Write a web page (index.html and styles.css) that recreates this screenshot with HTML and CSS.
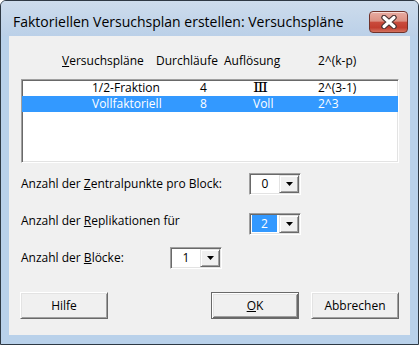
FILE: index.html
```html
<!DOCTYPE html>
<html lang="de">
<head>
<meta charset="utf-8">
<title>Faktoriellen Versuchsplan erstellen: Versuchspläne</title>
<link rel="stylesheet" href="styles.css">
</head>
<body>
<div class="window">
  <div class="titlebar">
    <span class="title">Faktoriellen Versuchsplan erstellen: Versuchspläne</span>
    <div class="close">
      <svg width="16" height="14" viewBox="0 0 16 14">
        <path d="M3 2.5 L13 11.5 M13 2.5 L3 11.5" stroke="#4a3232" stroke-width="5.5" stroke-linecap="round" fill="none"/>
        <path d="M3 2.5 L13 11.5 M13 2.5 L3 11.5" stroke="#ffffff" stroke-width="3.2" stroke-linecap="round" fill="none"/>
      </svg>
    </div>
  </div>
  <div class="client">
    <div class="colhead">
      <span><u>V</u>ersuchspläne</span>
      <span>Durchläufe</span>
      <span>Auflösung</span>
      <span>2^(k-p)</span>
    </div>
    <div class="listbox">
      <div class="lrow">
        <span>1/2-Fraktion</span>
        <span>4</span>
        <span><span class="roman">Ⅲ</span></span>
        <span>2^(3-1)</span>
      </div>
      <div class="lrow sel">
        <span>Vollfaktoriell</span>
        <span>8</span>
        <span>Voll</span>
        <span>2^3</span>
      </div>
    </div>
    <div class="field field-a">
      <span class="label label-wide">Anzahl der <u>Z</u>entralpunkte pro Block:</span>
      <div class="combo">
        <span class="val">0</span>
        <span class="drop"><svg width="7" height="4" viewBox="0 0 7 4"><polygon points="0,0 7,0 3.5,4" fill="#000"/></svg></span>
      </div>
    </div>
    <div class="field field-b">
      <span class="label label-wide">Anzahl der <u>R</u>eplikationen für</span>
      <div class="combo">
        <span class="val val-sel">2</span>
        <span class="drop"><svg width="7" height="4" viewBox="0 0 7 4"><polygon points="0,0 7,0 3.5,4" fill="#000"/></svg></span>
      </div>
    </div>
    <div class="field field-c">
      <span class="label label-short">Anzahl der <u>B</u>löcke:</span>
      <div class="combo">
        <span class="val">1</span>
        <span class="drop"><svg width="7" height="4" viewBox="0 0 7 4"><polygon points="0,0 7,0 3.5,4" fill="#000"/></svg></span>
      </div>
    </div>
    <div class="buttons">
      <div class="btn">Hilfe</div>
      <div class="btn btn-default"><u>O</u>K</div>
      <div class="btn">Abbrechen</div>
    </div>
  </div>
</div>
</body>
</html>
```

FILE: styles.css
```css
html, body {
  margin: 0;
  padding: 0;
  background: #ffffff;
}

body {
  font-family: "Open Sans", "Liberation Sans", sans-serif;
  font-size: 12px;
  color: #000;
}

u {
  text-decoration: underline;
  text-underline-offset: 1px;
}

.window {
  width: 419px;
  height: 345px;
  box-sizing: border-box;
  border: 1px solid #2e3944;
  border-radius: 6px 6px 0 0;
  background: #b9d1ea;
  display: flex;
  flex-direction: column;
  overflow: hidden;
}

.titlebar {
  height: 35px;
  flex: none;
  display: flex;
  align-items: flex-start;
  background: linear-gradient(#cddcec, #bbd0e8);
}

.title {
  font-size: 14px;
  line-height: 16px;
  margin: 13px 0 0 12px;
  white-space: nowrap;
}

.close {
  margin: 10px 10px 0 auto;
  width: 39px;
  height: 22px;
  box-sizing: border-box;
  border: 1px solid #70322a;
  border-radius: 4px;
  background: linear-gradient(#e8aca2 0%, #dc9183 45%, #c94b3c 52%, #c23e2f 78%, #d4725f 100%);
  box-shadow: inset 0 1px rgba(255, 255, 255, 0.55);
  display: flex;
  align-items: center;
  justify-content: center;
}

.client {
  flex: 1;
  margin: 0 8px 9px 8px;
  background: #f0f0f0;
  padding: 17px 11px 0 12px;
  display: flex;
  flex-direction: column;
}

.colhead {
  display: grid;
  grid-template-columns: 94px 68px 94px 1fr;
  padding-left: 41px;
  height: 16px;
  line-height: 16px;
  white-space: nowrap;
}

.listbox {
  margin-top: 10px;
  height: 84px;
  box-sizing: border-box;
  background: #fff;
  border: 1px solid;
  border-color: #a0a0a0 #ffffff #ffffff #a0a0a0;
  box-shadow: inset 1px 1px #696969, inset -1px -1px #e3e3e3;
}

.lrow {
  display: grid;
  grid-template-columns: 108px 53px 65px 1fr;
  padding-left: 70px;
  height: 16px;
  line-height: 16px;
  white-space: nowrap;
}

.lrow.sel {
  background: #3399ff;
  color: #fff;
}

.roman {
  display: inline-block;
  font-family: "DejaVu Serif", "Liberation Serif", serif;
  font-size: 12px;
  transform: scaleX(1.3);
  transform-origin: left center;
}

.field {
  display: flex;
  align-items: center;
  height: 22px;
}

.field-a { margin-top: 10px; }
.field-b { margin-top: 18px; align-items: flex-start; }
.field-c { margin-top: 12px; }

.label {
  line-height: 16px;
  white-space: nowrap;
}

.label-wide { width: 228px; }
.label-short { width: 149px; }

.combo {
  width: 52px;
  height: 22px;
  box-sizing: border-box;
  background: #fff;
  border: 1px solid;
  border-color: #a0a0a0 #ffffff #ffffff #a0a0a0;
  box-shadow: inset 1px 1px #696969, inset -1px -1px #e3e3e3;
  padding: 1px;
  display: flex;
}

.val {
  flex: 1;
  text-align: center;
  line-height: 18px;
}

.val-sel {
  background: #3399ff;
  color: #fff;
  margin: 0 2px 1px 1px;
  line-height: 17px;
}

.drop {
  width: 20px;
  height: 18px;
  box-sizing: border-box;
  background: #f0f0f0;
  border: 1px solid;
  border-color: #e3e3e3 #696969 #696969 #e3e3e3;
  box-shadow: inset 1px 1px #ffffff, inset -1px -1px #a0a0a0;
  display: flex;
  align-items: center;
  justify-content: center;
}

.drop svg {
  display: block;
}

.buttons {
  margin-top: 23px;
  margin-left: -1px;
  display: flex;
  gap: 12px;
}

.btn {
  width: 88px;
  height: 27px;
  box-sizing: border-box;
  background: #f0f0f0;
  border: 1px solid;
  border-color: #ffffff #696969 #696969 #ffffff;
  box-shadow: inset 1px 1px #e3e3e3, inset -1px -1px #a0a0a0;
  text-align: center;
  line-height: 25px;
}

.btn:first-child {
  margin-right: auto;
}

.btn-default {
  border-color: #696969;
  box-shadow: inset 1px 1px #ffffff, inset -1px -1px #696969, inset 2px 2px #e3e3e3, inset -2px -2px #a0a0a0;
}
```
